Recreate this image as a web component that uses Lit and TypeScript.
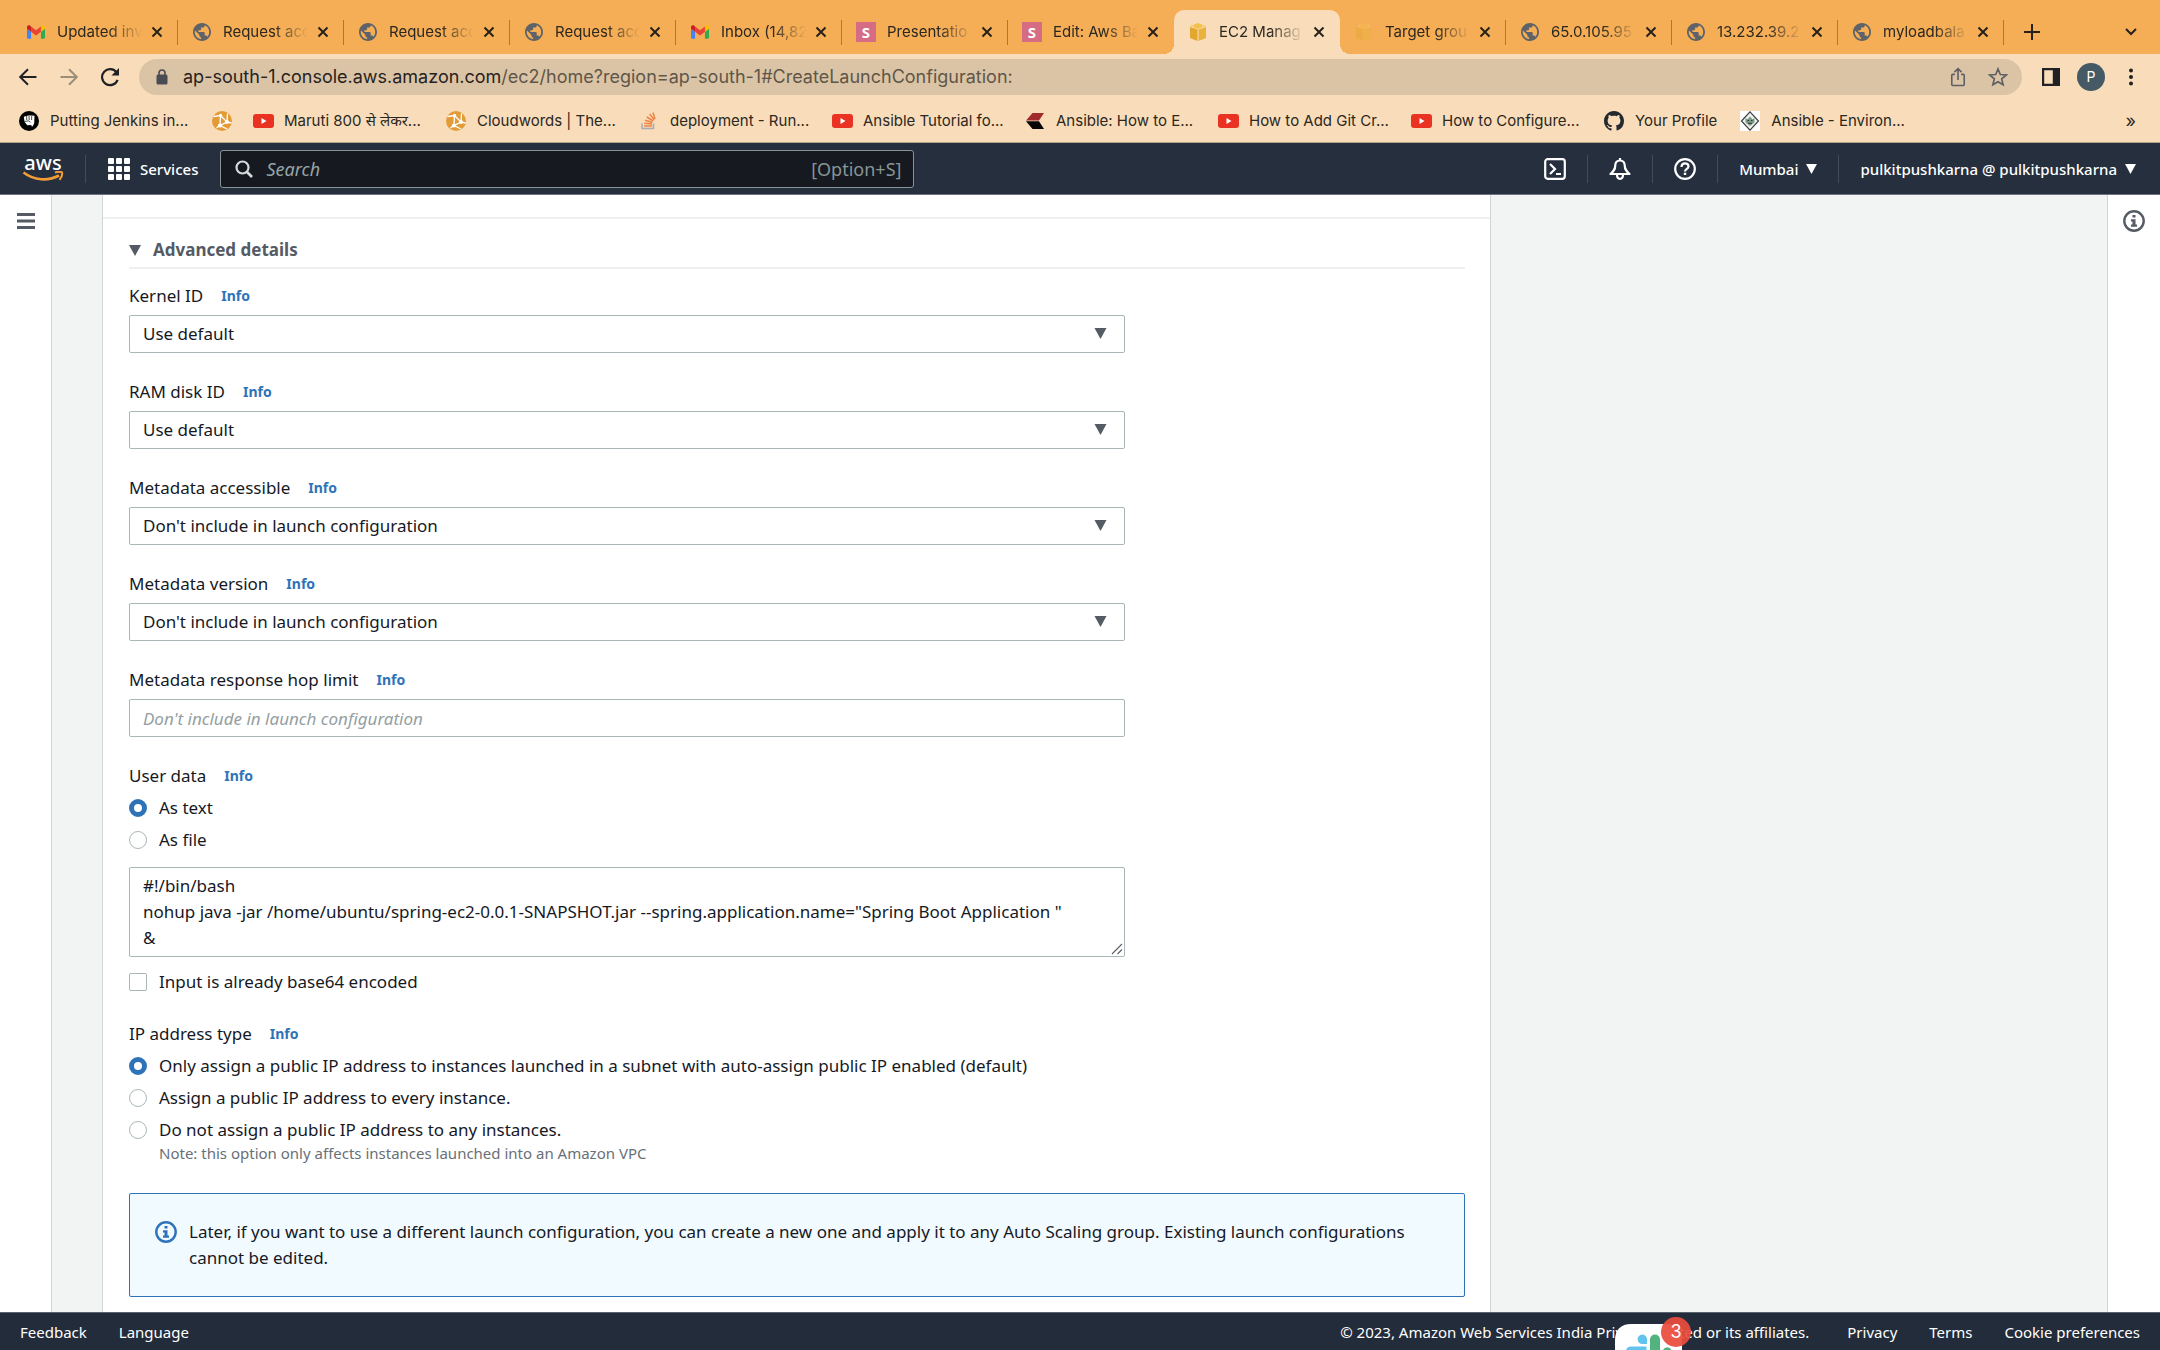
import { LitElement, html, css, svg, TemplateResult } from "lit";
import { customElement } from "lit/decorators.js";
import { classMap } from "lit/directives/class-map.js";

type Glyph = TemplateResult;

const icon = (viewBox: string, width: number, height: number, body: unknown): Glyph =>
  html`<svg viewBox=${viewBox} width=${width} height=${height} aria-hidden="true" fill="none">${body}</svg>`;

const gmail = icon("52 42 88 66", 18, 14, svg`
  <path fill="#4285f4" d="M58 108h14V74L52 59v43c0 3.3 2.7 6 6 6"/>
  <path fill="#34a853" d="M120 108h14c3.3 0 6-2.7 6-6V59l-20 15"/>
  <path fill="#fbbc04" d="M120 48v26l20-15v-8c0-7.4-8.5-11.6-14.4-7.2"/>
  <path fill="#ea4335" d="M72 74V48l24 18 24-18v26L96 92"/>
  <path fill="#c5221f" d="M52 51v8l20 15V48l-5.600-4.200c-5.900-4.400-14.400-.2-14.400 7.200"/>`);

const globe = icon("2 2 20 20", 18, 18, svg`
  <path fill="#5f6368" d="M12 2C6.480 2 2 6.480 2 12s4.480 10 10 10 10-4.480 10-10S17.520 2 12 2zm-1 17.930c-3.950-.49-7-3.850-7-7.930 0-.62.08-1.210.21-1.790L9 15v1c0 1.100.9 2 2 2v1.930zm6.900-2.540c-.26-.81-1-1.390-1.900-1.390h-1v-3c0-.55-.45-1-1-1H8v-2h2c.55 0 1-.45 1-1V7h2c1.100 0 2-.9 2-2v-.41c2.930 1.190 5 4.060 5 7.410 0 2.080-.8 3.970-2.100 5.390z"/>`);

const slides = html`<span class="s-badge">S</span>`;

const cube = (faded: boolean) => icon("0 0 18 18", 18, 18, svg`
  <g opacity=${faded ? "0.4" : "1"}>
    <path fill="#f2c14e" d="M9 0l8 3-8 3-8-3z"/>
    <path fill="#e3a72f" d="M1 4l7.500 2.500V18L1 15z"/>
    <path fill="#e8b23c" d="M17 4L9.500 6.500V18L17 15z"/>
    <path stroke="#f9ddba" stroke-width=".8" d="M4 2v3M14 2v3"/>
  </g>`);

const fist = icon("0 0 20 20", 20, 20, svg`
  <circle cx="10" cy="10" r="10" fill="#000"/>
  <path fill="#fff" d="M4.800 5.800l2.500-.8 2.500-.4 2.500-.1 3.200.3-.3 7.500-1.500 2.900-1 .3-.4-1.500-4 .2-2.700-3.200z"/>
  <path stroke="#000" stroke-width=".7" d="M7.500 5.200l.3 3.800M10 5l.2 4M12.700 5l-.1 4M5.500 10.500l4-.7 2 1.500"/>`);

const cloudwords = icon("0 0 20 20", 20, 20, svg`
  <circle cx="10" cy="10" r="10" fill="#e39b38"/>
  <path stroke="#fff" stroke-width="1.300" d="M1.500 5.500l7-1 6.500 6.500-7 3.500 7 3.500M8.500 4.500L8 14.500 4.500 17M15 11l.5-8.500M15 11l4.500 1"/>
  <circle cx="8.500" cy="4.500" r="1.700" fill="#fff"/><circle cx="15" cy="11" r="1.900" fill="#fff"/><circle cx="8" cy="14.500" r="2.100" fill="#fff"/>`);

const youtube = icon("0 0 21 14", 21, 14, svg`
  <rect width="21" height="14" rx="3" fill="#ea3223"/><path fill="#fff" d="M8.500 4v6l5-3z"/>`);

const stack = icon("0 0 18 20", 18, 20, svg`
  <path stroke="#a9adb5" stroke-width="1.600" d="M2 12.500V17.500h11.500v-5"/>
  <path stroke="#ee8344" stroke-width="1.500" d="M4 15h8M4.200 12.300l7.800.8M5 9.300l7.400 2.200M6.800 6l6.400 4M9.600 3l4.600 5.800M13 1.500l2 6.500"/>`);

const chevrons = icon("0 0 18 16", 18, 16, svg`
  <path fill="#a32a2c" d="M6.500 0H18l-5 7.500H0z"/><path fill="#070707" d="M0 8.200h13L18 16H6.500z"/>`);

const github = icon("0 0 16 16", 20, 20, svg`
  <path fill="#24292f" d="M8 0C3.580 0 0 3.580 0 8c0 3.540 2.290 6.530 5.470 7.590.4.070.55-.17.55-.38 0-.19-.01-.82-.01-1.490-2.010.37-2.530-.49-2.690-.94-.09-.23-.48-.94-.82-1.130-.28-.15-.68-.52-.01-.53.63-.01 1.080.58 1.230.82.72 1.210 1.870.87 2.330.66.07-.52.28-.87.51-1.070-1.780-.2-3.640-.89-3.640-3.950 0-.87.31-1.590.82-2.150-.08-.2-.36-1.020.08-2.120 0 0 .67-.21 2.200.82.64-.18 1.320-.27 2-.27s1.360.09 2 .27c1.530-1.040 2.200-.82 2.200-.82.44 1.100.16 1.920.08 2.120.51.56.82 1.270.82 2.150 0 3.070-1.870 3.750-3.650 3.950.29.25.54.73.54 1.480 0 1.070-.01 1.930-.01 2.200 0 .21.15.46.55.38A8.010 8.010 0 0 0 16 8c0-4.420-3.580-8-8-8z"/>`);

const environ = icon("0 0 20 20", 20, 20, svg`
  <rect width="20" height="20" fill="#fff"/>
  <path stroke="#3c4043" stroke-width="1.200" fill="#eef2ee" d="M10 .8l8.500 9.200-8.500 9.200L1.500 10z"/>
  <path fill="#7d9a86" d="M5.500 7l2 1.200L10 5.500l2.500 2.700 2-1.200v4.500L10 15l-4.500-3.500z"/>
  <path stroke="#2c3b33" d="M7.500 9.500h1.500M11 9.500h1.500M8 12.300h4"/>`);

const cross = icon("0 0 12 12", 12, 12, svg`<path stroke="#26221b" stroke-width="2" d="M1.500 1.500l9 9M10.500 1.500l-9 9"/>`);
const plus = icon("0 0 16 16", 16, 16, svg`<path stroke="#26221b" stroke-width="2" d="M8 0v16M0 8h16"/>`);
const caret = icon("0 0 12 8", 12, 8, svg`<path stroke="#26221b" stroke-width="2" d="M1 1l5 5 5-5"/>`);
const back = icon("0 0 20 20", 20, 20, svg`<path stroke="#202124" stroke-width="2" d="M18.500 10H3M10 2.200L2.200 10l7.800 7.800"/>`);
const forward = icon("0 0 20 20", 20, 20, svg`<path stroke="#9c8d78" stroke-width="2" d="M1.500 10H17M10 2.200l7.800 7.800-7.800 7.800"/>`);
const reload = icon("0 0 20 20", 20, 20, svg`
  <path stroke="#202124" stroke-width="2.200" d="M16.600 5.500A8 8 0 1 0 17.600 12.800"/><path fill="#202124" d="M19 1v7.500h-7.500z"/>`);
const lock = icon("0 0 12 16", 12, 16, svg`
  <rect x=".5" y="5.500" width="11" height="10" rx="1.500" fill="#4a4c54"/><path stroke="#4a4c54" stroke-width="1.600" d="M3 6V4a3 3 0 0 1 6 0v2"/>`);
const share = icon("0 0 18 22", 16, 20, svg`
  <path stroke="#5f6063" stroke-width="1.800" d="M5.500 8H3a1 1 0 0 0-1 1v10.500a1 1 0 0 0 1 1h12a1 1 0 0 0 1-1V9a1 1 0 0 0-1-1h-2.500M9 14.500V2M5 5.500l4-4 4 4"/>`);
const star = icon("0 0 20 20", 20, 20, svg`
  <path stroke="#5f6063" stroke-width="1.700" d="M10 2l2.300 5.500 6 .5-4.600 3.900 1.400 5.900L10 14.700l-5.100 3.100 1.400-5.900L1.700 8l6-.5z"/>`);
const panel = icon("0 0 18 18", 18, 18, svg`
  <path fill="#202124" fill-rule="evenodd" d="M0 0h18v18H0zM2.200 2.200v13.600h8.600V2.200z"/>`);
const dots = icon("0 0 4 18", 4, 18, svg`
  <g fill="#202124"><circle cx="2" cy="2.500" r="2"/><circle cx="2" cy="9" r="2"/><circle cx="2" cy="15.500" r="2"/></g>`);

const smile = icon("0 0 42 11", 42, 11, svg`
  <path stroke="#f29c38" stroke-width="2.600" d="M1.500 1.500C12 9.500 26 10.500 37 4.500"/>
  <path stroke="#f29c38" stroke-width="2" stroke-linejoin="round" d="M33 1.500c3-1 5.500-1 7-.2.600 2.200-.3 5-2.500 7.500"/>`);
const apps = icon("0 0 22 22", 22, 22, svg`<g fill="#fff">${[0, 8, 16].map((y) =>
  [0, 8, 16].map((x) => svg`<rect x=${x} y=${y} width="6" height="6" rx="1"/>`))}</g>`);
const magnifier = icon("0 0 18 18", 18, 18, svg`
  <circle cx="7.500" cy="7.500" r="6" stroke="#d5dbdb" stroke-width="2.200"/><path stroke="#d5dbdb" stroke-width="2.600" d="M12 12l5 5"/>`);
const shell = icon("0 0 22 22", 22, 22, svg`
  <rect x="1.200" y="1.200" width="19.600" height="19.600" rx="2.500" stroke="#fff" stroke-width="2.200"/>
  <path stroke="#fff" stroke-width="2.200" d="M6 6l5 5-5 5M12 16h5"/>`);
const bell = icon("0 0 22 22", 22, 22, svg`
  <path stroke="#fff" stroke-width="2.200" stroke-linejoin="round" d="M11 2.500c-3 0-4.800 2.300-4.800 5.500 0 3.500-1.500 5-4.700 8h19c-3.200-3-4.700-4.500-4.700-8 0-3.200-1.800-5.500-4.800-5.500zM8 16.500c0 2.800 1 4.300 3 4.300s3-1.500 3-4.300M11 0v2.500"/>`);
const help = icon("0 0 22 22", 22, 22, svg`
  <circle cx="11" cy="11" r="9.800" stroke="#fff" stroke-width="2.200"/>
  <path stroke="#fff" stroke-width="2.200" d="M7.500 9c0-2.300 1.400-3.600 3.500-3.600s3.500 1.300 3.500 3.100c0 2.300-3.500 2.500-3.500 5"/><path fill="#fff" d="M9.800 14.700h2.400V17H9.800z"/>`);
const info = icon("0 0 22 22", 22, 22, svg`
  <circle cx="11" cy="11" r="9.700" stroke="currentColor" stroke-width="2.400"/>
  <path fill="currentColor" d="M9.500 5h3v2.600h-3zM8 9.200h4.500v5.300H14v2.200H8v-2.200h1.500v-3.100H8z"/>`);
const triangle = (width: number, height: number) =>
  icon("0 0 12 11", width, height, svg`<path fill="currentColor" d="M0 0h12L6 11z"/>`);
const menu = icon("0 0 18 16", 18, 16, svg`<path fill="#545b64" d="M0 0h18v3H0zM0 6.500h18v3H0zM0 13h18v3H0z"/>`);
const grip = icon("0 0 12 12", 12, 12, svg`<path stroke="#5f6368" stroke-width="1.200" d="M1 11L11 1M6.500 11L11 6.500"/>`);
const slack = icon("0 0 67 26", 67, 26, svg`
  <path fill="#fff" d="M0 26V16C0 6 6 0 16 0h35c10 0 16 6 16 16v10z"/>
  <path fill="#62c3ec" d="M32 20h-4.500a4.700 4.700 0 1 1 4.500-4.700zM11 26a5 5 0 0 1 5-3.500h15.500V26z"/>
  <path fill="#53b37f" d="M35 26V15.500a5 5 0 0 1 10 0V26zM48 26a4.700 4.700 0 0 1 8.500 0z"/>`);

interface Tab { title: string; glyph: Glyph; active?: boolean; plain?: boolean; }
const tabs: Tab[] = [
  { title: "Updated inv", glyph: gmail },
  { title: "Request acc", glyph: globe },
  { title: "Request acc", glyph: globe },
  { title: "Request acc", glyph: globe },
  { title: "Inbox (14,82", glyph: gmail },
  { title: "Presentatio", glyph: slides },
  { title: "Edit: Aws Ba", glyph: slides, plain: true },
  { title: "EC2 Manag", glyph: cube(false), active: true, plain: true },
  { title: "Target grou", glyph: cube(true) },
  { title: "65.0.105.95", glyph: globe },
  { title: "13.232.39.2", glyph: globe },
  { title: "myloadbala", glyph: globe },
];

interface Bookmark { title: string; glyph: Glyph; natural?: boolean; }
const bookmarks: Bookmark[] = [
  { title: "Putting Jenkins in...", glyph: fist },
  { title: "", glyph: cloudwords, natural: true },
  { title: "Maruti 800 से लेकर...", glyph: youtube },
  { title: "Cloudwords | The...", glyph: cloudwords },
  { title: "deployment - Run...", glyph: stack },
  { title: "Ansible Tutorial fo...", glyph: youtube },
  { title: "Ansible: How to E...", glyph: chevrons },
  { title: "How to Add Git Cr...", glyph: youtube },
  { title: "How to Configure...", glyph: youtube },
  { title: "Your Profile", glyph: github, natural: true },
  { title: "Ansible - Environ...", glyph: environ },
];

@customElement("browser-chrome")
class BrowserChrome extends LitElement {
  static styles = css`
    :host { display: block; font: 15px/20px Inter, "Noto Sans", sans-serif; color: #2b2721; }
    svg { display: block; flex: none; }
    button { border: 0; padding: 0; margin: 0; background: none; font: inherit; color: inherit; display: flex; align-items: center; justify-content: center; flex: none; }
    .strip { display: flex; background: #f5ae56; padding: 10px 22px 0 12px; height: 44px; }
    .tab { flex: 0 1 166px; min-width: 0; box-sizing: border-box; display: flex; align-items: center; padding: 0 14px 0 15px; position: relative; }
    .tab::after { content: ""; position: absolute; right: 0; top: 10px; height: 25px; width: 1px; background: #a8783c; }
    .tab.plain::after { display: none; }
    .tab.active { background: #f9ddba; border-radius: 10px 10px 0 0; }
    .tab.active::before { content: ""; position: absolute; left: -10px; right: -10px; bottom: 0; height: 10px;
      background: radial-gradient(circle at 0 0, transparent 10px, #f9ddba 10px) 0 0 / 10px 10px no-repeat,
        radial-gradient(circle at 10px 0, transparent 10px, #f9ddba 10px) 100% 0 / 10px 10px no-repeat; }
    .fav { width: 18px; margin-right: 12px; display: flex; justify-content: center; flex: none; }
    .title { flex: 1; min-width: 0; overflow: hidden; white-space: nowrap; -webkit-mask-image: linear-gradient(90deg, #000 60%, transparent); mask-image: linear-gradient(90deg, #000 60%, transparent); }
    .close { width: 14px; margin-left: 8px; }
    .s-badge { width: 20px; margin: 0 -1px; height: 20px; flex: none; background: #d66b84; color: #fff; font: 700 15px/20px "Noto Sans", sans-serif; text-align: center; }
    .new-tab { width: 24px; margin-left: 16px; }
    .tab-search { width: 24px; margin-left: auto; margin-right: -5px; }
    .toolbar { background: #f9ddba; display: flex; align-items: center; gap: 17px; height: 46px; padding: 0 17px 0 16px; }
    .nav-button { width: 24px; height: 24px; }
    .omnibox { flex: 1; min-width: 0; display: flex; align-items: center; height: 36px; border-radius: 18px; background: #dbc4a5; padding: 0 14px 0 17px; }
    .url { flex: 1; min-width: 0; margin-left: 15px; font-size: 18px; line-height: 24px; color: #5f5649; white-space: nowrap; overflow: hidden; }
    .host { color: #26221e; }
    .tools { display: flex; gap: 22px; }
    .actions { display: flex; align-items: center; gap: 14px; }
    .avatar { width: 28px; height: 28px; border-radius: 50%; background: #455a64; color: #fff; font-size: 14px; }
    .bookmarks { background: #f9ddba; border-bottom: 1px solid #b5a48a; display: flex; align-items: center; height: 42px; gap: 21px; padding: 0 24px 0 19px; }
    .bookmark { display: flex; align-items: center; gap: 11px; color: inherit; text-decoration: none; white-space: nowrap; min-width: 0; }
    .bookmark .icon { width: 20px; display: flex; justify-content: center; flex: none; }
    .label { width: 141px; overflow: hidden; }
    .label.natural { width: auto; padding-right: 2px; }
    .more { margin-left: auto; font-size: 18px; }
  `;

  render() {
    return html`
      <div class="strip">
        ${tabs.map((t) => html`
          <div class=${classMap({ tab: true, active: !!t.active, plain: !!t.plain })}>
            <span class="fav">${t.glyph}</span><span class="title">${t.title}</span>
            <button class="close" aria-label="Close tab">${cross}</button>
          </div>`)}
        <button class="new-tab" aria-label="New tab">${plus}</button>
        <button class="tab-search" aria-label="Search tabs">${caret}</button>
      </div>
      <div class="toolbar">
        <button class="nav-button" aria-label="Back">${back}</button>
        <button class="nav-button" aria-label="Forward">${forward}</button>
        <button class="nav-button" aria-label="Reload">${reload}</button>
        <div class="omnibox">
          ${lock}
          <div class="url" role="textbox" aria-label="Address"><span class="host">ap-south-1.console.aws.amazon.com</span>/ec2/home?region=ap-south-1#CreateLaunchConfiguration:</div>
          <div class="tools"><button aria-label="Share">${share}</button><button aria-label="Bookmark">${star}</button></div>
        </div>
        <div class="actions">
          <button class="nav-button" aria-label="Side panel">${panel}</button>
          <button class="avatar" aria-label="Profile">P</button>
          <button class="nav-button" aria-label="Menu">${dots}</button>
        </div>
      </div>
      <div class="bookmarks">
        ${bookmarks.map((b) => html`
          <a class="bookmark" href="#"><span class="icon">${b.glyph}</span>${b.title
            ? html`<span class=${classMap({ label: true, natural: !!b.natural })}>${b.title}</span>` : ""}</a>`)}
        <button class="more" aria-label="More bookmarks">»</button>
      </div>`;
  }
}

@customElement("console-nav")
class ConsoleNav extends LitElement {
  static styles = css`
    :host { display: flex; align-items: center; gap: 22px; height: 52px; box-sizing: border-box; padding: 0 24px 0 23px; background: #252f3e; border-bottom: 1px solid #6b7480; color: #fff; font: 500 15px/20px "Noto Sans", sans-serif; }
    svg { display: block; flex: none; }
    button { border: 0; padding: 0; background: none; font: inherit; color: inherit; display: flex; align-items: center; gap: 8px; white-space: nowrap; flex: none; }
    .logo { display: flex; flex-direction: column; align-items: center; width: 40px; color: #fff; text-decoration: none; font: 500 20px/16px "Noto Sans", sans-serif; flex: none; }
    .rule { width: 1px; height: 28px; background: #414b59; flex: none; }
    .services { gap: 10px; }
    .search { flex: 0 1 694px; min-width: 0; box-sizing: border-box; height: 38px; display: flex; align-items: center; gap: 13px; padding: 0 12px 0 14px; background: #16191f; border: 1px solid #879596; border-radius: 3px; }
    .search input { flex: 1; min-width: 0; border: 0; outline: 0; padding: 0; background: none; color: #fff; font: 18px/24px "Noto Sans", sans-serif; }
    .search input::placeholder { color: #95a5a6; font-style: italic; }
    .hint { color: #879596; font: 18px/24px "Noto Sans", sans-serif; }
    .right { margin-left: auto; display: flex; align-items: center; gap: 21px; }
  `;

  render() {
    return html`
      <a class="logo" href="#" aria-label="AWS home"><span>aws</span>${smile}</a>
      <span class="rule"></span>
      <button class="services">${apps}Services</button>
      <label class="search">${magnifier}<input type="search" placeholder="Search" aria-label="Search" /><span class="hint">[Option+S]</span></label>
      <div class="right">
        <button aria-label="CloudShell">${shell}</button><span class="rule"></span>
        <button aria-label="Notifications">${bell}</button><span class="rule"></span>
        <button aria-label="Help">${help}</button><span class="rule"></span>
        <button>Mumbai ${triangle(11, 10)}</button><span class="rule"></span>
        <button>pulkitpushkarna @ pulkitpushkarna ${triangle(11, 10)}</button>
      </div>`;
  }
}

const selects = [
  { id: "kernel", label: "Kernel ID", value: "Use default" },
  { id: "ramdisk", label: "RAM disk ID", value: "Use default" },
  { id: "metadata", label: "Metadata accessible", value: "Don't include in launch configuration" },
  { id: "version", label: "Metadata version", value: "Don't include in launch configuration" },
];

const userData = `#!/bin/bash
nohup java -jar /home/ubuntu/spring-ec2-0.0.1-SNAPSHOT.jar --spring.application.name="Spring Boot Application "
&`;

@customElement("launch-form")
class LaunchForm extends LitElement {
  static styles = css`
    :host { display: block; background: #fff; color: #16191f; font: 17px/26px "Noto Sans", sans-serif; }
    svg { display: block; flex: none; }
    .previous { height: 22px; border-bottom: 2px solid #eff1f1; }
    .section { padding: 18px 25px 15px 26px; }
    .heading { margin: 0; font: inherit; border-bottom: 2px solid #eff1f1; padding-bottom: 4px; }
    .heading button { border: 0; padding: 0; background: none; font: inherit; font-weight: 700; color: #545b64; display: flex; align-items: center; gap: 12px; }
    .fields { display: flex; flex-direction: column; gap: 26px; padding-top: 14px; }
    .field, fieldset { display: flex; flex-direction: column; gap: 6px; }
    fieldset { border: 0; margin: 0; padding: 0; min-width: 0; }
    .name { display: flex; align-items: center; gap: 18px; }
    .name a { color: #2e73b8; font-size: 14px; font-weight: 700; text-decoration: none; }
    .control { position: relative; width: 74.5%; color: #545b64; display: flex; }
    .control > svg { position: absolute; right: 18px; top: 13px; pointer-events: none; }
    .control > .grip { position: absolute; right: 2px; bottom: 2px; pointer-events: none; }
    select, .text, textarea { width: 100%; box-sizing: border-box; border: 1px solid #aab7b8; border-radius: 2px; background: #fff; color: #16191f; font: inherit; padding: 5px 13px; margin: 0; }
    select, .text { height: 38px; appearance: none; }
    .text::placeholder { color: #95a0a1; font-style: italic; opacity: 1; }
    textarea { height: 90px; resize: none; overflow: hidden; display: block; }
    .choices { display: flex; flex-direction: column; gap: 6px; }
    .choice { display: flex; gap: 12px; }
    .choice input { appearance: none; box-sizing: border-box; width: 18px; height: 18px; margin: 4px 0 0; border: 1px solid #aab7b8; background: #fff; flex: none; border-radius: 2px; }
    .choice input[type="radio"] { border-radius: 50%; }
    .choice input[type="radio"]:checked { border: 5px solid #2e73b8; }
    .script { margin: 8px 0 6px; }
    .note { display: block; font-size: 15px; line-height: 20px; color: #687078; }
    .alert { margin-top: 30px; border: 1px solid #2e73b8; border-radius: 2px; background: #f1faff; padding: 25px; display: flex; gap: 12px; }
    .alert svg { margin-top: 2px; color: #2e73b8; }
    .alert p { margin: 0; }
  `;

  private name(id: string, text: string) {
    return html`<div class="name"><label for=${id}>${text}</label><a href="#">Info</a></div>`;
  }

  private choice(group: string, text: string, checked = false, note = "") {
    return html`<label class="choice"><input type="radio" name=${group} ?checked=${checked} />
      <span>${text}${note ? html`<span class="note">${note}</span>` : ""}</span></label>`;
  }

  render() {
    return html`
      <div class="previous"></div>
      <div class="section">
        <h3 class="heading"><button aria-expanded="true">${triangle(12, 11)}Advanced details</button></h3>
        <form class="fields">
          ${selects.map((s) => html`<div class="field">${this.name(s.id, s.label)}
            <div class="control"><select id=${s.id}><option>${s.value}</option></select>${triangle(13, 11)}</div></div>`)}
          <div class="field">${this.name("hops", "Metadata response hop limit")}
            <div class="control"><input class="text" id="hops" placeholder="Don't include in launch configuration" /></div></div>
          <fieldset>
            ${this.name("script", "User data")}
            <div class="choices">${this.choice("data", "As text", true)}${this.choice("data", "As file")}</div>
            <div class="control script"><textarea id="script" .value=${userData}></textarea><span class="grip">${grip}</span></div>
            <label class="choice"><input type="checkbox" /><span>Input is already base64 encoded</span></label>
          </fieldset>
          <fieldset aria-label="IP address type">
            <div class="name"><span>IP address type</span><a href="#">Info</a></div>
            <div class="choices">
              ${this.choice("ip", "Only assign a public IP address to instances launched in a subnet with auto-assign public IP enabled (default)", true)}
              ${this.choice("ip", "Assign a public IP address to every instance.")}
              ${this.choice("ip", "Do not assign a public IP address to any instances.", false, "Note: this option only affects instances launched into an Amazon VPC")}
            </div>
          </fieldset>
        </form>
        <div class="alert">${info}<p>Later, if you want to use a different launch configuration, you can create a new one and apply it to any Auto Scaling group. Existing launch configurations cannot be edited.</p></div>
      </div>`;
  }
}

@customElement("console-footer")
class ConsoleFooter extends LitElement {
  static styles = css`
    :host { display: flex; align-items: center; gap: 32px; height: 38px; box-sizing: border-box; padding: 0 20px; background: #232c3a; border-top: 1px solid #59616c; color: #fff; font: 15px/20px "Noto Sans", sans-serif; position: relative; overflow: hidden; white-space: nowrap; }
    a { color: inherit; text-decoration: none; }
    .copyright { margin-left: auto; margin-right: 6px; }
    .dock { position: absolute; right: 478px; bottom: 0; }
    .dock svg { display: block; }
    .count { position: absolute; right: -9px; top: -7px; width: 30px; height: 30px; border-radius: 50%; background: rgba(234, 76, 61, .93); font: 18px/30px Inter, sans-serif; text-align: center; }
  `;

  render() {
    return html`
      <a href="#">Feedback</a><a href="#">Language</a>
      <span class="copyright">© 2023, Amazon Web Services India Private Limited or its affiliates.</span>
      <a href="#">Privacy</a><a href="#">Terms</a><a href="#">Cookie preferences</a>
      <div class="dock">${slack}<span class="count">3</span></div>`;
  }
}

@customElement("app-root")
class AppRoot extends LitElement {
  static styles = css`
    :host { display: flex; flex-direction: column; min-height: 100vh; background: #fff; }
    main { flex: 1; display: grid; grid-template-columns: 51px minmax(0, 1fr) 52px; }
    .rail { display: flex; flex-direction: column; align-items: center; }
    .rail button { border: 0; background: none; padding: 0; margin-top: 18px; color: #545b64; display: flex; }
    .rail.right button { margin-top: 15px; }
    .rail svg { display: block; }
    .canvas { background: #f2f3f3; border: 1px solid #d0d6d6; border-width: 0 1px; padding-left: 50px; display: flex; }
    launch-form { width: 69.2%; border: 1px solid #d0d6d6; border-width: 0 1px; }
  `;

  render() {
    return html`
      <browser-chrome></browser-chrome>
      <console-nav></console-nav>
      <main>
        <div class="rail"><button aria-label="Open navigation">${menu}</button></div>
        <div class="canvas"><launch-form></launch-form></div>
        <div class="rail right"><button aria-label="Open help panel">${info}</button></div>
      </main>
      <console-footer></console-footer>`;
  }
}
